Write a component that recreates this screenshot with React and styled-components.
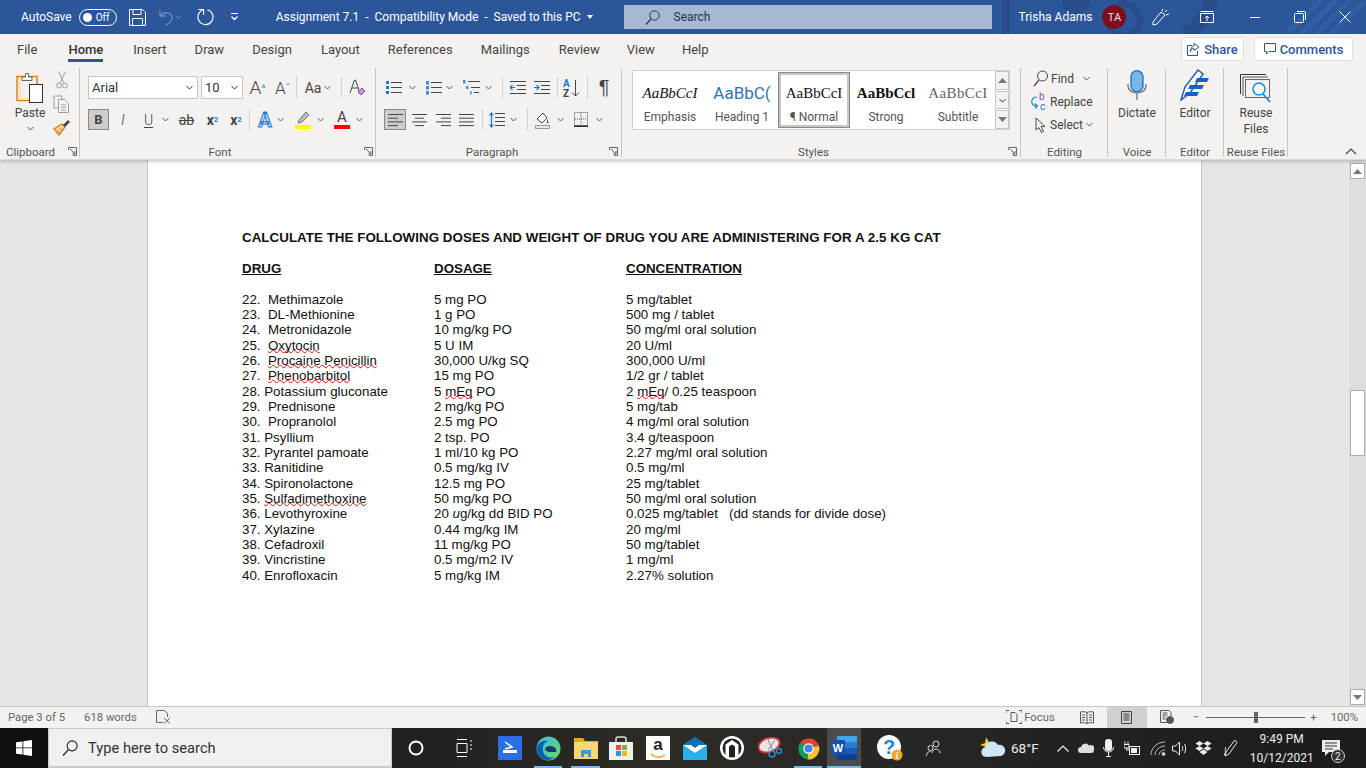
import React from 'react';
import styled, { createGlobalStyle } from 'styled-components';

const Global = createGlobalStyle`
  html, body { margin: 0; padding: 0; width: 1366px; height: 768px; overflow: hidden; background: #fff; }
  * { box-sizing: border-box; }
`;
const UI = `'Roboto', 'Noto Sans', sans-serif`;

const Screen = styled.div`
  width: 1366px; height: 768px; display: flex; flex-direction: column; overflow: hidden;
  font-family: ${UI}; font-size: 12px; color: #444;
`;

/* ---------- title bar ---------- */
const TitleBar = styled.header`
  position: relative; height: 34px; flex: none; display: flex; align-items: center;
  background: #2b579a; color: #fff; padding-left: 21px; overflow: hidden;
`;
const TitleDecor = styled.svg`position: absolute; right: 0; top: 0;`;
const TitleText = styled.span`
  position: relative; margin-left: ${p => p.$ml || 0}px; white-space: pre; font-size: ${p => p.$size || 12}px;
`;
const TitleIcon = styled.span`
  position: relative; display: inline-flex; align-items: center; justify-content: center;
  margin-left: ${p => p.$ml || 0}px; width: ${p => p.$w}px;
`;
const Toggle = styled.span`
  position: relative; margin-left: 7px; width: 38px; height: 17px; border: 1px solid #fff; border-radius: 9px;
  display: flex; align-items: center; font-size: 10px; padding-left: 3px; gap: 4px;
  &::before { content: ''; width: 9px; height: 9px; border-radius: 50%; background: #fff; }
`;
const SearchBox = styled.div`
  position: relative; margin-left: 31px; width: 368px; height: 24px; background: #a6b8d2; color: #24364f;
  display: flex; align-items: center; padding-left: 21px; gap: 14px;
`;
const Avatar = styled.span`
  position: relative; margin-left: 10px; width: 24px; height: 24px; border-radius: 50%; background: #7d0e1e;
  display: flex; align-items: center; justify-content: center; font-size: 11px; color: #f4dcdc;
`;

/* ---------- tabs ---------- */
const TabBar = styled.nav`
  height: 32px; flex: none; display: flex; align-items: flex-start; background: #f3f2f1; padding: 0 13px 0 3px;
`;
const Tab = styled.div`
  height: 30px; padding: 0 14px; margin-left: ${p => p.$ml || 0}px; display: flex; align-items: center; font-size: 13px; position: relative;
  color: ${p => p.$on ? '#333' : '#444'}; font-weight: ${p => p.$on ? 500 : 400};
  ${p => p.$on && `&::after { content: ''; position: absolute; left: 14px; right: 14px; bottom: 2px; height: 3px; background: #2b579a; }`}
`;
const TabSpacer = styled.div`flex: 1;`;
const PillButton = styled.button`
  height: 24px; width: ${p => p.$w}px; margin: 3px 0 0 ${p => p.$ml || 0}px; background: #fff; border: 1px solid #e1dfdd; border-radius: 2px;
  display: flex; align-items: center; justify-content: center; gap: 4px; padding: 0;
  font: 500 13px ${UI}; color: #2b579a;
`;

/* ---------- ribbon ---------- */
const Ribbon = styled.section`
  height: 94px; flex: none; display: flex; background: #f3f2f1; position: relative; z-index: 2;
  box-shadow: 0 2px 3px rgba(0,0,0,.18); border-bottom: 1px solid #dcdad8;
`;
const Group = styled.div`
  position: relative; width: ${p => p.$w}px; flex: none; display: flex; flex-direction: column; height: 93px;
  &::after { content: ''; position: absolute; right: 0; top: 2px; bottom: 2px; width: 1px; background: #c8c6c4; }
`;
const GroupBody = styled.div`flex: 1; min-height: 0; display: flex; ${p => p.$col && 'flex-direction: column;'} padding: ${p => p.$pad || '0'};`;
const GroupLabel = styled.div`
  height: 15px; line-height: 17px; flex: none; font-size: 11.5px; color: #555; white-space: nowrap;
  text-align: ${p => p.$left ? 'left' : 'center'}; padding-left: ${p => p.$left ? 6 : 0}px; padding-right: ${p => p.$pr || 0}px;
`;
const Launcher = styled.svg`position: absolute; right: ${p => p.$r}px; bottom: 3px;`;
const Row = styled.div`
  height: 21px; flex: none; display: flex; align-items: center; margin-bottom: 11px; padding-left: ${p => p.$pl || 0}px;
`;
const Tool = styled.span`
  flex: none; height: 21px; display: inline-flex; align-items: center; justify-content: center; white-space: nowrap;
  width: ${p => p.$w}px; margin-left: ${p => p.$ml || 0}px; color: ${p => p.$c || '#444'};
  font-size: ${p => p.$fs || 12}px; font-family: ${p => p.$arial ? `'Liberation Sans', sans-serif` : 'inherit'};
  font-weight: ${p => p.$b ? 700 : p.$thin ? 300 : 400}; font-style: ${p => p.$i ? 'italic' : 'normal'};
  ${p => p.$on && 'background: #cfcdcb; border: 1px solid #8a8886;'}
  ${p => p.$outline && '-webkit-text-stroke: 1px #1e78c8;'}
`;
const Caret = styled.sup`font-size: 9px; font-weight: 700; color: #2f8fd8; line-height: 0;`;
const Sub = styled.sub`font-size: 8px; color: #1e88d2; line-height: 0;`;
const Sup = styled.sup`font-size: 8px; color: #1e88d2; line-height: 0;`;
const Strike = styled.span`text-decoration: line-through;`;
const Under = styled.span`text-decoration: underline; text-underline-offset: 2px;`;
const Rule = styled.span`flex: none; width: 1px; height: 21px; background: #d2d0ce; margin-left: ${p => p.$ml || 0}px;`;
const ColorA = styled.span`
  display: inline-flex; flex-direction: column; align-items: center; line-height: 14px; font-size: 15px; color: #444;
  &::after { content: ''; width: 16px; height: 4px; margin-top: 1px; background: ${p => p.$bar}; }
`;
const ChevSvg = styled.svg`flex: none; margin-left: ${p => p.$ml || 0}px;`;
const Chev = ({ ml, dark }) => (
  <ChevSvg $ml={ml} width="7" height="5" viewBox="0 0 7 5"><path d="M.5 1 3.500 4 6.500 1" fill="none" stroke={dark || '#555'} strokeWidth="1" /></ChevSvg>
);
const Combo = styled.div`
  width: ${p => p.$w}px; margin-left: ${p => p.$ml || 0}px; height: 23px; margin-top: -1px; flex: none; background: #fff; border: 1px solid #c8c6c4;
  display: flex; align-items: center; justify-content: space-between; padding: 0 4px 0 3px;
  font: 13px ${UI}; color: #333;
`;
const PasteCol = styled.div`
  width: 53px; flex: none; display: flex; flex-direction: column; align-items: center; padding: 6px 0 0 7px; font-size: 12px;
`;
const PasteLabel = styled.span`margin-top: 1px; margin-bottom: 5px; line-height: 16px;`;
const SmallCol = styled.div`width: 17px; flex: none; display: flex; flex-direction: column; align-items: center; padding-top: 5px; gap: 6px;`;

const Gallery = styled.div`
  margin: 4px 0 0 10px; width: 378px; height: 60px; display: flex; background: #fff; border: 1px solid #d2d0ce; padding: 1px 0 0 1px;
`;
const StyleItem = styled.div`
  width: 72px; height: 56px; flex: none; display: flex; flex-direction: column; align-items: center; padding-top: 12px; overflow: hidden;
  ${p => p.$on && 'border: 3px solid #c8c6c4; outline: 1px solid #8a8886; outline-offset: -1px; padding-top: 9px;'}
`;
const StyleSample = styled.span`
  height: 18px; line-height: 18px; width: 64px; overflow: hidden; white-space: nowrap; text-align: center; color: ${p => p.$c || '#111'};
  font-family: ${p => p.$sans ? UI : `'Liberation Serif', serif`}; font-size: ${p => p.$fs || 15}px;
  font-style: ${p => p.$i ? 'italic' : 'normal'}; font-weight: ${p => p.$b ? 700 : 400}; letter-spacing: ${p => p.$ls || 0}px;
`;
const StyleName = styled.span`margin-top: 7px; font-size: 12px; line-height: 16px; color: #555; white-space: nowrap;`;
const GalleryScroll = styled.div`width: 14px; margin-left: 1px; margin-top: -1px; display: flex; flex-direction: column; gap: 1px; flex: none;`;
const ScrollCell = styled.div`
  flex: 1; border: 1px solid #c8c6c4; background: #f3f2f1; display: flex; align-items: center; justify-content: center;
`;
const EditRow = styled.div`
  height: 23px; display: flex; align-items: center; padding-left: ${p => p.$pl || 12}px; gap: 3px; font-size: 12px;
`;
const BigTool = styled.div`
  flex: 1; display: flex; flex-direction: column; align-items: center; padding-top: ${p => p.$pt || 1}px; font-size: 12px;
  span { line-height: 16px; }
`;
const BigIcon = styled.div`
  height: ${p => p.$h || 35}px; display: flex; align-items: center; justify-content: center; margin-bottom: ${p => p.$mb ?? 3}px;
`;
const RibbonEnd = styled.div`flex: 1; display: flex; align-items: flex-end; justify-content: flex-end; padding: 0 9px 4px 0;`;

/* ---------- document ---------- */
const DocArea = styled.main`flex: 1; min-height: 0; display: flex; background: #e6e6e6;`;
const Gutter = styled.div`width: ${p => p.$w ? p.$w + 'px' : 'auto'}; flex: ${p => p.$w ? 'none' : 1};`;
const Page = styled.article`
  width: 1055px; flex: none; background: #fff; border: solid #c6c6c6; border-width: 0 1px; padding: 70px 0 0 94px;
  font: 13.33px/15.33px 'Liberation Sans', Arial, sans-serif; color: #111; letter-spacing: 0;
`;
const Heading = styled.div`font-weight: 700; height: 30.66px; white-space: pre; letter-spacing: .05px;`;
const DocRow = styled.div`
  display: grid; grid-template-columns: 192px 192px auto; height: ${p => p.$h || 15.33}px; white-space: pre;
  ${p => p.$head && 'font-weight: 700; text-decoration: underline;'}
`;
const Spell = styled.span`
  text-decoration: underline wavy #e01010 1px; text-underline-offset: -1px; text-decoration-skip-ink: none;
`;
const Scrollbar = styled.aside`
  width: 17px; flex: none; background: #dedede; display: flex; flex-direction: column; padding: 3px 0 1px 1px;
`;
const ScrollBtn = styled.div`
  height: 16px; width: 15px; flex: none; background: #fff; border: 1px solid #ababab; display: flex; align-items: center; justify-content: center;
`;
const ScrollThumb = styled.div`height: 66px; width: 15px; flex: none; margin-top: ${p => p.$t}px; background: #fff; border: 1px solid #ababab;`;
const Grow = styled.div`flex: 1;`;

/* ---------- status ---------- */
const StatusBar = styled.footer`
  height: 22px; flex: none; display: flex; align-items: center; background: #f3f2f1; border-top: 1px solid #c8c6c4;
  padding: 0 8px 1px; font-size: 11.3px; color: #666;
`;
const StatusItem = styled.span`
  margin-left: ${p => p.$ml || 0}px; display: inline-flex; align-items: center; justify-content: center; white-space: nowrap; flex: none;
  ${p => p.$w && `width: ${p.$w}px;`} ${p => p.$on && 'background: #d2d0ce; height: 21px;'}
`;
const Zoom = styled.span`
  position: relative; margin-left: 7px; width: 99px; height: 1px; background: #666; flex: none;
  &::after { content: ''; position: absolute; left: 48px; top: -5px; width: 4px; height: 11px; background: #666; }
`;

/* ---------- taskbar ---------- */
const Taskbar = styled.footer`
  height: 40px; flex: none; display: flex; align-items: center; color: #fff;
  background: linear-gradient(90deg, #131313 0, #22211e 30%, #2d2b26 48%, #2a2926 60%, #222 78%, #1c1c1c 100%);
`;
const StartBtn = styled.div`width: 48px; height: 40px; flex: none; display: flex; align-items: center; justify-content: center; background: #111;`;
const TaskSearch = styled.div`
  width: 344px; height: 40px; flex: none; background: #f0f0f0; border: 1px solid #c9c9c9; border-bottom-width: 2px; display: flex; align-items: center; padding-left: 13px;
  gap: 10px; color: #333; font-size: 14.700px;
`;
const TaskIcon = styled.div`
  position: relative; flex: none; height: 40px; width: ${p => p.$w}px; margin-left: ${p => p.$ml || 0}px; display: flex; align-items: center; justify-content: center;
  ${p => p.$bg && `background: ${p.$bg};`}
  ${p => p.$run && `&::after { content: ''; position: absolute; left: 0; right: 0; bottom: 0; height: 2px; background: #76b9ed; }`}
`;
const TrayText = styled.span`margin-left: ${p => p.$ml || 0}px; font-size: 13.5px; flex: none; color: #eee;`;
const Clock = styled.div`
  margin-left: 11px; padding-top: 1px; width: 62px; flex: none; display: flex; flex-direction: column; align-items: center; gap: 4px; font-size: 12px; color: #eee; line-height: 15px; white-space: nowrap;
`;
const AmazonBox = styled.div`
  width: 24px; height: 24px; background: #fff; display: flex; flex-direction: column; align-items: center; color: #222; font: 700 17px/17px 'Liberation Sans', sans-serif; 
`;
const Badge = styled.span`
  position: absolute; right: -5px; top: 21px; width: 14px; height: 14px; border-radius: 50%; border: 1px solid #ccc; background: #333;
  display: flex; align-items: center; justify-content: center; font-size: 10px; color: #eee;
`;

/* ---------- icons ---------- */
const Launch = ({ r }) => (
  <Launcher $r={r} width="9" height="9" viewBox="0 0 9 9"><path d="M.5 3V.5H8.500V8.500H5M2 2 7 7M7 4V7H4" fill="none" stroke="#666" /></Launcher>
);
const L = ({ x1, x2, y, c = '#444', w = 1 }) => <line x1={x1} x2={x2} y1={y} y2={y} stroke={c} strokeWidth={w} />;
const Lines = ({ x1 = 0, x2 = 15, ys, c }) => ys.map(y => <L key={y} x1={x1} x2={x2} y={y + .5} c={c} />);

const PasteIcon = () => (
  <svg width="28" height="32" viewBox="0 0 28 32">
    <rect x="1" y="4.500" width="20" height="24" fill="#f3f2f1" stroke="#d9791a" strokeWidth="1.400" />
    <path d="M2.500 6v21.500H13V26H5V6z" fill="#fbe3b0" />
    <path d="M6 8.500V5h3.500V1.500h3V5H16v3.500z" fill="#f8f8f8" stroke="#666" />
    <rect x="13.500" y="12.500" width="13" height="18" fill="#fff" stroke="#333" />
  </svg>
);
const CutIcon = () => (
  <svg width="12" height="18" viewBox="0 0 12 18" fill="none" stroke="#a19f9d">
    <path d="M2.500 .5 8 12M9.500 .5 4 12" /><circle cx="3" cy="14.500" r="2.500" /><circle cx="9" cy="14.500" r="2.500" />
  </svg>
);
const CopyIcon = () => (
  <svg width="17" height="18" viewBox="0 0 17 18" fill="none" stroke="#a19f9d">
    <path d="M1 1h8v3M1 1v12h4" /><path d="M5.500 4.500h6l4 4v9h-10z" /><path d="M8 10h5M8 12.500h5M8 15h5" />
  </svg>
);
const PainterIcon = () => (
  <svg width="18" height="17" viewBox="0 0 18 17">
    <path d="M9 5 1 10l5 6 6-8z" fill="#fbd9a6" stroke="#d9791a" strokeWidth="1.300" />
    <path d="M10 6 15 1l2 2-5 5z" fill="#444" />
    <path d="M4 10.500l2.500 3M7 9l2 2.500" stroke="#d9791a" />
  </svg>
);
const ClearIcon = () => (
  <svg width="17" height="20" viewBox="0 0 17 20">
    <path d="M1 15 5.500 2h1L11 15M3 10h6" fill="none" stroke="#444" />
    <path d="M9 14l4-4 3 3-4 4z" fill="#c79ad6" stroke="#8e3ea8" />
  </svg>
);
const BulletIcon = () => (
  <svg width="16" height="15" viewBox="0 0 16 15">
    {[1, 6, 11].map(y => <rect key={y} x="0" y={y} width="3" height="3" fill="#1e78c8" />)}
    <Lines x1={5} x2={16} ys={[2, 7, 12]} />
  </svg>
);
const NumberIcon = () => (
  <svg width="17" height="15" viewBox="0 0 17 15">
    {[1, 6, 11].map(y => <rect key={y} x="1" y={y} width="3" height="3.500" fill="#3c8fd8" />)}
    <Lines x1={6} x2={17} ys={[2, 7, 12]} />
  </svg>
);
const MultiIcon = () => (
  <svg width="17" height="15" viewBox="0 0 17 15">
    <rect x="0" y="0" width="2.500" height="3.500" fill="#3c8fd8" /><rect x="3" y="6" width="2.500" height="3" fill="#3c8fd8" /><rect x="7" y="11" width="1.500" height="3.500" fill="#3c8fd8" />
    <L x1={5} x2={17} y={1.5} /><L x1={8} x2={17} y={7.5} /><L x1={11} x2={16} y={12.5} />
  </svg>
);
const IndentIcon = ({ rev }) => (
  <svg width="16" height="15" viewBox="0 0 16 15">
    <Lines x1={0} x2={16} ys={[1, 13]} /><Lines x1={7} x2={16} ys={[5, 9]} />
    <path d={rev ? 'M5 7.500H0M2.500 5 0 7.500 2.500 10' : 'M0 7.500H5M2.500 5 5 7.500 2.500 10'} fill="none" stroke="#1e78c8" strokeWidth="1.200" />
  </svg>
);
const SortIcon = () => (
  <svg width="18" height="20" viewBox="0 0 18 20">
    <text x="0" y="9" fontSize="10" fontWeight="700" fill="#1e78c8" fontFamily="Roboto, sans-serif">A</text>
    <text x="0" y="19" fontSize="10" fontWeight="700" fill="#444" fontFamily="Roboto, sans-serif">Z</text>
    <path d="M12.500 2v16M9 14.500l3.500 3.500 3.500-3.500" fill="none" stroke="#444" />
  </svg>
);
const AlignIcon = ({ kind }) => {
  const s = { l: [[0, 15], [0, 10], [0, 15], [0, 10]], c: [[0, 15], [3, 12], [0, 15], [3, 12]], r: [[0, 15], [5, 15], [0, 15], [5, 15]], j: [[0, 15], [0, 15], [0, 15], [0, 15]] }[kind];
  return <svg width="15" height="14" viewBox="0 0 15 14">{s.map((p, i) => <L key={i} x1={p[0]} x2={p[1]} y={1.5 + i * 3.7} />)}</svg>;
};
const SpacingIcon = () => (
  <svg width="16" height="16" viewBox="0 0 16 16">
    <Lines x1={6} x2={16} ys={[1, 5, 9, 13]} />
    <path d="M2.500 1v14M.5 3.500l2-2.500 2 2.500M.5 12.500l2 2.500 2-2.500" fill="none" stroke="#1e78c8" strokeWidth="1.200" />
  </svg>
);
const ShadeIcon = () => (
  <svg width="15" height="18" viewBox="0 0 15 18">
    <path d="M2 8 8 2l4 5-5 5z" fill="#fff" stroke="#444" /><path d="M12 8c1 2 2 3 1.500 4-.7.600-2 0-1.500-4z" fill="#444" />
    <rect x=".5" y="14.500" width="14" height="3" fill="#e8e6e4" stroke="#999" />
  </svg>
);
const BorderIcon = () => (
  <svg width="14" height="15" viewBox="0 0 14 15">
    <rect x=".5" y=".5" width="13" height="13" fill="none" stroke="#555" strokeDasharray="1 1" />
    <path d="M7 1v12M1 7h12" stroke="#555" strokeDasharray="1 1" /><path d="M0 14.200h14" stroke="#222" strokeWidth="1.500" />
  </svg>
);
const FindIcon = () => (
  <svg width="15" height="17" viewBox="0 0 15 17" fill="none" stroke="#444"><circle cx="9.500" cy="6" r="5" /><path d="M6 10 1 16" strokeWidth="1.200" /></svg>
);
const ReplaceIcon = () => (
  <svg width="16" height="19" viewBox="0 0 16 19">
    <text x="8" y="8" fontSize="10" fill="#9c3fb8" fontFamily="Roboto, sans-serif">b</text>
    <text x="9" y="18" fontSize="10" fill="#1e78c8" fontFamily="Roboto, sans-serif">c</text>
    <path d="M6 5C2 5 0 8 1 11c.5 2 2 3 5 3M4 11.500 6.500 14 4 16.500" fill="none" stroke="#1e88d2" strokeWidth="1.200" />
  </svg>
);
const CursorIcon = () => (
  <svg width="12" height="16" viewBox="0 0 12 16"><path d="M1 1v12l3-2.500 2.500 5 2-1-2.500-5h4z" fill="#fff" stroke="#444" /></svg>
);
const MicIcon = () => (
  <svg width="20" height="30" viewBox="0 0 20 30">
    <rect x="4" y=".7" width="12" height="21" rx="6" fill="#79b7ea" stroke="#1f6fc0" strokeWidth="1.300" />
    <path d="M1 14v2c0 4 4 7 9 7s9-3 9-7v-2M10 23v7" fill="none" stroke="#666" strokeWidth="1.200" />
  </svg>
);
const EditorIcon = () => (
  <svg width="32" height="32" viewBox="0 0 32 32">
    <path d="M2 31 6 18 19 1l5 4-13 19z" fill="#fff" stroke="#1b5fbf" strokeWidth="1.500" />
    <path d="M18 9h12l-2 4H16zM11 16h14l-2 4H9zM7 23h13l-2 4H5z" fill="#1b5fbf" />
  </svg>
);
const ReuseIcon = () => (
  <svg width="32" height="29" viewBox="0 0 32 29" fill="none">
    <path d="M.5 20V.5H26" stroke="#333" /><path d="M3 22V3h25" stroke="#555" />
    <rect x="5.500" y="5.500" width="24" height="18" fill="#f3f2f1" stroke="#666" />
    <circle cx="19" cy="15" r="6" stroke="#1e88d2" strokeWidth="1.500" fill="#f2f8fc" /><path d="M23 20l7 8" stroke="#1e88d2" strokeWidth="1.800" />
  </svg>
);
const UpChevron = () => <svg width="12" height="7" viewBox="0 0 12 7"><path d="M1 6 6 1l5 5" fill="none" stroke="#444" strokeWidth="1.200" /></svg>;
const MiniTri = ({ down }) => <svg width="9" height="5" viewBox="0 0 9 5"><path d={down ? 'M0 0h9L4.500 5z' : 'M4.500 0 9 5H0z'} fill="#777" /></svg>;

const SearchGlyph = ({ c, w = 15 }) => (
  <svg width={w} height={w} viewBox="0 0 15 15" fill="none" stroke={c}><circle cx="9.500" cy="5.500" r="4.700" /><path d="M6 9 1 14.500" strokeWidth="1.200" /></svg>
);

/* ---------- app ---------- */
const drugs = [
  [<>22.  Methimazole</>, '5 mg PO', '5 mg/tablet'],
  [<>23.  DL-Methionine</>, '1 g PO', '500 mg / tablet'],
  [<>24.  Metronidazole</>, '10 mg/kg PO', '50 mg/ml oral solution'],
  [<>25.  <Spell>Oxytocin</Spell></>, '5 U IM', '20 U/ml'],
  [<>26.  <Spell>Procaine Penicillin</Spell></>, '30,000 U/kg SQ', '300,000 U/ml'],
  [<>27.  <Spell>Phenobarbitol</Spell></>, '15 mg PO', '1/2 gr / tablet'],
  [<>28. Potassium gluconate</>, <>5 <Spell>mEq</Spell> PO</>, <>2 <Spell>mEq</Spell>/ 0.25 teaspoon</>],
  [<>29.  Prednisone</>, '2 mg/kg PO', '5 mg/tab'],
  [<>30.  Propranolol</>, '2.5 mg PO', '4 mg/ml oral solution'],
  [<>31. Psyllium</>, '2 tsp. PO', '3.4 g/teaspoon'],
  [<>32. Pyrantel pamoate</>, '1 ml/10 kg PO', '2.27 mg/ml oral solution'],
  [<>33. Ranitidine</>, '0.5 mg/kg IV', '0.5 mg/ml'],
  [<>34. Spironolactone</>, '12.5 mg PO', '25 mg/tablet'],
  [<>35. <Spell>Sulfadimethoxine</Spell></>, '50 mg/kg PO', '50 mg/ml oral solution'],
  [<>36. Levothyroxine</>, <>20 <i>u</i>g/kg dd BID PO</>, '0.025 mg/tablet   (dd stands for divide dose)'],
  [<>37. Xylazine</>, '0.44 mg/kg IM', '20 mg/ml'],
  [<>38. Cefadroxil</>, '11 mg/kg PO', '50 mg/tablet'],
  [<>39. Vincristine</>, '0.5 mg/m2 IV', '1 mg/ml'],
  [<>40. Enrofloxacin</>, '5 mg/kg IM', '2.27% solution'],
];

const tabs = [['File'], ['Home', 3], ['Insert', 2], ['Draw'], ['Design'], ['Layout', 1], ['References'], ['Mailings'], ['Review', 1], ['View', -1], ['Help', -1]];
const gallery = [
  { name: 'Emphasis', i: true },
  { name: 'Heading 1', sans: true, fs: 17, c: '#2e74b5', text: 'AaBbC(' },
  { name: '¶ Normal', on: true },
  { name: 'Strong', b: true, text: 'AaBbCcl' },
  { name: 'Subtitle', c: '#666', ls: .4 },
];

export default function App() {
  return (
    <Screen>
      <Global />
      <TitleBar>
        <TitleDecor width="370" height="34" viewBox="0 0 370 34" fill="none">
          <circle cx="128" cy="20" r="16" stroke="#284d8a" strokeWidth="7" />
          <circle cx="80" cy="0" r="14" fill="#284d8a" />
          <path d="M190 34C210 20 216 8 214 -4" stroke="#284d8a" strokeWidth="14" />
          <path d="M290 34 325 0M305 34 340 0M320 34 354 0M335 34 368 2" stroke="#2f5fa4" strokeWidth="5" />
          <path d="M10 34V0" stroke="#284d8a" strokeWidth="8" />
        </TitleDecor>
        <TitleText>AutoSave</TitleText>
        <Toggle>Off</Toggle>
        <TitleIcon $ml={12} $w={18}>
          <svg width="17" height="17" viewBox="0 0 17 17" fill="none" stroke="#fff"><path d="M.5.5h13l3 3v13H.5z" /><path d="M4 .5v5h8v-5M3.500 16.500v-7h10v7" /></svg>
        </TitleIcon>
        <TitleIcon $ml={12} $w={22}>
          <svg width="22" height="17" viewBox="0 0 22 17" fill="none" stroke="#6d8bb9" strokeWidth="1.300"><path d="M1 1v6h6M1 7C5 2 13 3 13 9c0 3-3 6-6 7" /><path d="M17 7l2.500 2.500L22 7" strokeWidth="1" /></svg>
        </TitleIcon>
        <TitleIcon $ml={16} $w={17}>
          <svg width="18" height="18" viewBox="0 0 18 18" fill="none" stroke="#fff" strokeWidth="1.200"><path d="M6 1.600A8 8 0 1 0 11 1.300" /><path d="M1.500 1H7V6.500" /></svg>
        </TitleIcon>
        <TitleIcon $ml={16} $w={9}>
          <svg width="9" height="8" viewBox="0 0 9 8" fill="none" stroke="#fff"><path d="M1 .5h7" /><path d="M1.500 3.500 4.500 6.500 7.500 3.500" strokeWidth="1.300" /></svg>
        </TitleIcon>
        <TitleText $ml={37}>Assignment 7.1  -  Compatibility Mode  -  Saved to this PC</TitleText>
        <TitleIcon $ml={6} $w={6}><svg width="6" height="4" viewBox="0 0 6 4"><path d="M0 0h6L3 4z" fill="#fff" /></svg></TitleIcon>
        <SearchBox><SearchGlyph c="#24364f" />Search</SearchBox>
        <TitleText $ml={27}>Trisha Adams</TitleText>
        <Avatar>TA</Avatar>
        <TitleIcon $ml={26} $w={18}>
          <svg width="18" height="18" viewBox="0 0 18 18" fill="none" stroke="#fff"><path d="M1 14 9 4l4 3-8 9-4 1zM10 3l1-2M13 4l2-2M14 7l3-1" /></svg>
        </TitleIcon>
        <TitleIcon $ml={30} $w={14}>
          <svg width="14" height="12" viewBox="0 0 14 12" fill="none" stroke="#fff"><path d="M.5 2.500h13v9H.5zM.5.500h13M7 10V5M5 7l2-2 2 2" /></svg>
        </TitleIcon>
        <TitleIcon $ml={36} $w={10}><svg width="10" height="1"><rect width="10" height="1" fill="#fff" /></svg></TitleIcon>
        <TitleIcon $ml={34} $w={12}>
          <svg width="12" height="12" viewBox="0 0 12 12" fill="none" stroke="#fff"><rect x=".5" y="2.500" width="9" height="9" rx="1" /><path d="M3 .5h7a1.500 1.500 0 0 1 1.500 1.500v7" /></svg>
        </TitleIcon>
        <TitleIcon $ml={33} $w={12}>
          <svg width="12" height="12" viewBox="0 0 12 12"><path d="M.5.5l11 11M11.500.5l-11 11" stroke="#fff" /></svg>
        </TitleIcon>
      </TitleBar>

      <TabBar>
        {tabs.map(([t, ml]) => <Tab key={t} $ml={ml} $on={t === 'Home'}>{t}</Tab>)}
        <TabSpacer />
        <PillButton $w={63}>
          <svg width="13" height="14" viewBox="0 0 13 14" fill="none" stroke="#2b579a"><path d="M5 3.500H.5v10h10V9M7 1.500l5 3.500-5 3.500v-2C4.500 6.500 3.500 8 3.500 10c0-3 1-5.500 3.500-6z" /></svg>
          Share
        </PillButton>
        <PillButton $w={99} $ml={10}>
          <svg width="12" height="12" viewBox="0 0 12 12" fill="none" stroke="#2b579a"><path d="M.5.5h11v8H5L2.500 11V8.500h-2z" /></svg>
          Comments
        </PillButton>
      </TabBar>

      <Ribbon>
        <Group $w={80}>
          <GroupBody>
            <PasteCol>
              <PasteIcon />
              <PasteLabel>Paste</PasteLabel>
              <Chev />
            </PasteCol>
            <SmallCol>
              <CutIcon /><CopyIcon /><PainterIcon />
            </SmallCol>
          </GroupBody>
          <GroupLabel $left>Clipboard</GroupLabel>
          <Launch r={3} />
        </Group>

        <Group $w={296}>
          <GroupBody $col $pad="11px 0 0 8px">
            <Row>
              <Combo $w={110}>Arial<Chev dark="#333" /></Combo>
              <Combo $w={42} $ml={3}>10<Chev dark="#333" /></Combo>
              <Tool $ml={7} $w={15} $fs={19} $thin>A<Caret>^</Caret></Tool>
              <Tool $ml={10} $w={15} $fs={17} $thin>A<Caret>ˇ</Caret></Tool>
              <Rule $ml={6} />
              <Tool $ml={7} $w={18} $fs={14}>Aa</Tool>
              <Chev ml={2} />
              <Rule $ml={10} />
              <Tool $ml={7} $w={17}><ClearIcon /></Tool>
            </Row>
            <Row>
              <Tool $w={21} $b $fs={13} $on>B</Tool>
              <Tool $ml={9} $w={10} $i $thin $fs={15}>I</Tool>
              <Tool $ml={14} $w={13} $fs={14} $thin><Under>U</Under></Tool>
              <Chev ml={7} />
              <Tool $ml={9} $w={17} $fs={14}><Strike>ab</Strike></Tool>
              <Tool $ml={10} $w={15} $b $fs={14}>x<Sub>2</Sub></Tool>
              <Tool $ml={9} $w={14} $b $fs={14}>x<Sup>2</Sup></Tool>
              <Rule $ml={6} />
              <Tool $ml={7} $w={16} $fs={20} $b $outline $c="#cfe6f8">A</Tool>
              <Chev ml={4} />
              <Tool $ml={11} $w={16}>
                <ColorA $bar="#ffff00"><svg width="14" height="14" viewBox="0 0 14 14"><path d="M2 13l1-3 7-8 3 3-7 7z" fill="#bbb" stroke="#777" /></svg></ColorA>
              </Tool>
              <Chev ml={6} />
              <Tool $ml={10} $w={16}><ColorA $bar="#ff0000">A</ColorA></Tool>
              <Chev ml={6} />
            </Row>
          </GroupBody>
          <GroupLabel $pr={16}>Font</GroupLabel>
          <Launch r={3} />
        </Group>

        <Group $w={246}>
          <GroupBody $col $pad="11px 0 0 0">
            <Row $pl={10}>
              <Tool $w={16}><BulletIcon /></Tool>
              <Chev ml={7} />
              <Tool $ml={9} $w={17}><NumberIcon /></Tool>
              <Chev ml={4} />
              <Tool $ml={10} $w={17}><MultiIcon /></Tool>
              <Chev ml={5} />
              <Rule $ml={10} />
              <Tool $ml={7} $w={16}><IndentIcon rev /></Tool>
              <Tool $ml={8} $w={16}><IndentIcon /></Tool>
              <Rule $ml={7} />
              <Tool $ml={5} $w={18}><SortIcon /></Tool>
              <Rule $ml={6} />
              <Tool $ml={10} $w={12} $fs={20} $arial>¶</Tool>
            </Row>
            <Row $pl={8}>
              <Tool $w={22} $on><AlignIcon kind="l" /></Tool>
              <Tool $ml={6} $w={15}><AlignIcon kind="c" /></Tool>
              <Tool $ml={9} $w={15}><AlignIcon kind="r" /></Tool>
              <Tool $ml={8} $w={15}><AlignIcon kind="j" /></Tool>
              <Rule $ml={8} />
              <Tool $ml={6} $w={16}><SpacingIcon /></Tool>
              <Chev ml={5} />
              <Rule $ml={10} />
              <Tool $ml={7} $w={15}><ShadeIcon /></Tool>
              <Chev ml={7} />
              <Tool $ml={10} $w={14}><BorderIcon /></Tool>
              <Chev ml={8} />
            </Row>
          </GroupBody>
          <GroupLabel $pr={14}>Paragraph</GroupLabel>
          <Launch r={4} />
        </Group>

        <Group $w={399}>
          <GroupBody>
            <Gallery>
              {gallery.map(g => (
                <StyleItem key={g.name} $on={g.on}>
                  <StyleSample $i={g.i} $b={g.b} $c={g.c} $fs={g.fs} $sans={g.sans} $ls={g.ls}>{g.text || 'AaBbCcI'}</StyleSample>
                  <StyleName>{g.name}</StyleName>
                </StyleItem>
              ))}
              <GalleryScroll>
                <ScrollCell><MiniTri /></ScrollCell>
                <ScrollCell><Chev dark="#333" /></ScrollCell>
                <ScrollCell><MiniTri down /></ScrollCell>
              </GalleryScroll>
            </Gallery>
          </GroupBody>
          <GroupLabel $pr={16}>Styles</GroupLabel>
          <Launch r={4} />
        </Group>

        <Group $w={87}>
          <GroupBody $col $pad="1px 0 0">
            <EditRow><FindIcon />Find<Chev ml={6} /></EditRow>
            <EditRow $pl={10}><ReplaceIcon />Replace</EditRow>
            <EditRow $pl={14}><CursorIcon /><span>Select</span><Chev /></EditRow>
          </GroupBody>
          <GroupLabel>Editing</GroupLabel>
        </Group>

        <Group $w={58}>
          <BigTool><BigIcon><MicIcon /></BigIcon><span>Dictate</span></BigTool>
          <GroupLabel>Voice</GroupLabel>
        </Group>
        <Group $w={58}>
          <BigTool><BigIcon><EditorIcon /></BigIcon><span>Editor</span></BigTool>
          <GroupLabel>Editor</GroupLabel>
        </Group>
        <Group $w={64}>
          <BigTool $pt={8}><BigIcon $h={29} $mb={2}><ReuseIcon /></BigIcon><span>Reuse</span><span>Files</span></BigTool>
          <GroupLabel>Reuse Files</GroupLabel>
        </Group>
        <RibbonEnd><UpChevron /></RibbonEnd>
      </Ribbon>

      <DocArea>
        <Gutter $w={147} />
        <Page>
          <Heading>CALCULATE THE FOLLOWING DOSES AND WEIGHT OF DRUG YOU ARE ADMINISTERING FOR A 2.5 KG CAT</Heading>
          <DocRow $head $h={31.16}>
            <span>DRUG</span><span>DOSAGE</span><span>CONCENTRATION</span>
          </DocRow>
          {drugs.map((d, i) => (
            <DocRow key={i}><span>{d[0]}</span><span>{d[1]}</span><span>{d[2]}</span></DocRow>
          ))}
        </Page>
        <Gutter />
        <Scrollbar>
          <ScrollBtn><MiniTri /></ScrollBtn>
          <ScrollThumb $t={211} />
          <Grow />
          <ScrollBtn><MiniTri down /></ScrollBtn>
        </Scrollbar>
      </DocArea>

      <StatusBar>
        <StatusItem>Page 3 of 5</StatusItem>
        <StatusItem $ml={19}>618 words</StatusItem>
        <StatusItem $ml={19}>
          <svg width="15" height="14" viewBox="0 0 15 14" fill="none" stroke="#666"><path d="M.5.5h8l3 3V7M.5.500v12H7M8 8l6 5.500M14 8l-6 5.500" /></svg>
        </StatusItem>
        <Grow />
        <StatusItem>
          <svg width="16" height="14" viewBox="0 0 16 14" fill="none" stroke="#555"><path d="M0 3V.5h3M13 .5h3V3M0 11v2.500h3M13 13.500h3V11M5 2.500h4l2 2v7H5z" /></svg>
        </StatusItem>
        <StatusItem $ml={2}>Focus</StatusItem>
        <StatusItem $ml={25}>
          <svg width="14" height="13" viewBox="0 0 14 13" fill="none" stroke="#555"><path d="M7 1.500C5 .5 2 .5.500 1v11c2-.5 4.500-.5 6.500.500 2-1 4.500-1 6.500-.500V1C12 .5 9 .5 7 1.500zM7 1.500v11M2 4h3M2 6.500h3M2 9h3M9 4h3M9 6.500h3M9 9h3" /></svg>
        </StatusItem>
        <StatusItem $ml={13} $w={40} $on>
          <svg width="11" height="13" viewBox="0 0 11 13" fill="none" stroke="#444"><path d="M.5.5h10v12H.5zM2.500 3h6M2.500 5h6M2.500 7h6M2.500 9h6" /></svg>
        </StatusItem>
        <StatusItem $ml={13}>
          <svg width="14" height="14" viewBox="0 0 14 14" fill="none" stroke="#555"><path d="M7 12.500H.5V.5H9l2 2V6M2.500 3h5M2.500 5h5M2.500 7h3M2.500 9h3" /><circle cx="10" cy="10" r="3.500" fill="#555" /></svg>
        </StatusItem>
        <StatusItem $ml={19}>−</StatusItem>
        <Zoom />
        <StatusItem $ml={5}>+</StatusItem>
        <StatusItem $ml={14}>100%</StatusItem>
      </StatusBar>

      <Taskbar>
        <StartBtn>
          <svg width="16" height="16" viewBox="0 0 16 16" fill="#fff"><path d="M0 2.300 6.500 1.400V7.500H0zM7.300 1.300 16 0V7.500H7.300zM0 8.300H6.500V14.600L0 13.700zM7.300 8.300H16V16L7.300 14.700z" /></svg>
        </StartBtn>
        <TaskSearch><SearchGlyph c="#222" w={16} />Type here to search</TaskSearch>
        <TaskIcon $ml={16} $w={16}>
          <svg width="16" height="16" viewBox="0 0 16 16" fill="none" stroke="#fff" strokeWidth="2"><circle cx="8" cy="8" r="6.500" /></svg>
        </TaskIcon>
        <TaskIcon $ml={31} $w={18}>
          <svg width="17" height="18" viewBox="0 0 17 18" fill="none" stroke="#fff"><path d="M1 .5h10M1 17.500h10M1 4.500h10v9H1zM15 1v2M15 5v2M15 9v2" /></svg>
        </TaskIcon>
        <TaskIcon $ml={25} $w={24}>
          <svg width="24" height="24" viewBox="0 0 24 24"><rect width="24" height="24" fill="#2a6fe8" /><path d="M7 13l7-2-7-5" fill="none" stroke="#fff" strokeWidth="1.500" /><rect x="5" y="14" width="14" height="3" fill="#fff" /></svg>
        </TaskIcon>
        <TaskIcon $ml={12} $w={28} $run>
          <svg width="25" height="25" viewBox="0 0 25 25">
            <defs><linearGradient id="edgeA" x1="0" y1="0" x2="1" y2="1"><stop offset="0" stopColor="#35c1f1" /><stop offset="1" stopColor="#6fd65a" /></linearGradient></defs>
            <circle cx="12.500" cy="12.500" r="12" fill="url(#edgeA)" />
            <path d="M1 13C1 6 7 4 13 5c-5 1-7 5-6 10 1 5 6 8 12 6-3 3-8 4-12 2C3 21 1 17 1 13z" fill="#0b5fb5" />
            <path d="M9 13c1-3 6-4 9-2 2 1 3 3 2 5h-7c-2-1-4-1-4-3z" fill="#1b3a6b" />
          </svg>
        </TaskIcon>
        <TaskIcon $ml={9} $w={29} $run>
          <svg width="24" height="22" viewBox="0 0 24 22">
            <path d="M0 1h9l2 3h13v18H0z" fill="#e8a91d" /><rect y="5" width="24" height="17" fill="#fcd66f" />
            <path d="M7 20v-7h10v7h-3v-3h-4v3z" fill="#3a9bd9" />
          </svg>
        </TaskIcon>
        <TaskIcon $ml={9} $w={24}>
          <svg width="24" height="24" viewBox="0 0 24 24">
            <path d="M7 6V3a2 2 0 0 1 2-2h6a2 2 0 0 1 2 2v3" fill="none" stroke="#ddd" strokeWidth="1.500" />
            <rect y="6" width="24" height="18" fill="#f0f0f0" />
            <rect x="7" y="9" width="5" height="5" fill="#f25022" /><rect x="13" y="9" width="5" height="5" fill="#7fba00" />
            <rect x="7" y="15" width="5" height="5" fill="#00a4ef" /><rect x="13" y="15" width="5" height="5" fill="#ffb900" />
          </svg>
        </TaskIcon>
        <TaskIcon $ml={13} $w={24}>
          <AmazonBox>a<svg width="16" height="6" viewBox="0 0 16 6"><path d="M1 1c4 4 10 4 14 1" fill="none" stroke="#f39a1f" strokeWidth="1.500" /></svg></AmazonBox>
        </TaskIcon>
        <TaskIcon $ml={13} $w={24}>
          <svg width="24" height="23" viewBox="0 0 24 23"><path d="M12 0 24 8v15H0V8z" fill="#0f7ac7" /><path d="M0 8l12 8 12-8v15H0z" fill="#28b0ef" /><path d="M0 8l12 8 12-8" fill="#fff" /><path d="M4 5 12 .9 20 5l-8 6z" fill="#0f6fb6" /></svg>
        </TaskIcon>
        <TaskIcon $ml={13} $w={24}>
          <svg width="24" height="24" viewBox="0 0 24 24"><circle cx="12" cy="12" r="12" fill="#fff" /><circle cx="12" cy="12" r="9.500" fill="#222" /><path d="M12 4 5.500 8.500V20L9 21V10.500l3-2 3 2V21l3.500-1V8.500z" fill="#fff" /></svg>
        </TaskIcon>
        <TaskIcon $ml={14} $w={24}>
          <svg width="24" height="22" viewBox="0 0 24 22">
            <ellipse cx="11" cy="8" rx="11" ry="7" transform="rotate(-20 11 8)" fill="#e9e6e6" stroke="#c8303a" strokeWidth="2" />
            <path d="M10 2l5 12M17 3 10 13" stroke="#888" /><circle cx="14" cy="17" r="3" fill="none" stroke="#2190d8" strokeWidth="1.500" /><circle cx="21" cy="14" r="2.500" fill="none" stroke="#2190d8" strokeWidth="1.500" />
          </svg>
        </TaskIcon>
        <TaskIcon $ml={12} $w={28} $run>
          <svg width="23" height="23" viewBox="0 0 24 24">
            <path d="M12 12 3.500 5.500A11.500 11.500 0 0 1 23 9z" fill="#db4437" /><path d="M12 12 3.500 5.500A11.500 11.500 0 0 0 11 23.500z" fill="#0f9d58" /><path d="M12 12 23 9A11.500 11.500 0 0 1 11 23.500z" fill="#fbc02d" />
            <circle cx="12" cy="12" r="5.500" fill="#fff" /><circle cx="12" cy="12" r="4.300" fill="#4285f4" />
          </svg>
        </TaskIcon>
        <TaskIcon $ml={5} $w={34} $bg="#4b4b4b" $run>
          <svg width="26" height="24" viewBox="0 0 26 24">
            <rect x="6" y="0" width="20" height="6" fill="#41a5ee" /><rect x="6" y="6" width="20" height="6" fill="#2b7cd3" /><rect x="6" y="12" width="20" height="6" fill="#185abd" /><rect x="6" y="18" width="20" height="6" fill="#103f91" />
            <rect x="0" y="4" width="14" height="15" fill="#1a4fa8" />
            <text x="7" y="16" textAnchor="middle" fontSize="11" fontWeight="700" fill="#fff" fontFamily="Liberation Sans, sans-serif">W</text>
          </svg>
        </TaskIcon>
        <TaskIcon $ml={16} $w={26}>
          <svg width="26" height="26" viewBox="0 0 26 26">
            <circle cx="12" cy="12" r="12" fill="#fff" />
            <text x="12" y="19" textAnchor="middle" fontSize="20" fontWeight="700" fill="#1e88d2" fontFamily="Liberation Sans, sans-serif">?</text>
            <circle cx="20" cy="20" r="5.500" fill="#f0a92d" /><text x="20" y="24" textAnchor="middle" fontSize="9" fontWeight="700" fill="#fff" fontFamily="Liberation Sans, sans-serif">i</text>
          </svg>
        </TaskIcon>
        <TaskIcon $ml={23} $w={15}>
          <svg width="15" height="17" viewBox="0 0 15 17" fill="none" stroke="#ddd"><circle cx="10" cy="4" r="3" /><circle cx="4.500" cy="8" r="2.500" /><path d="M.5 16c0-3 1.500-4.500 4-4.500M6 13c1-3 2-4 4-4s4 2 4.500 4" /></svg>
        </TaskIcon>
        <TaskIcon $ml={39} $w={26}>
          <svg width="26" height="24" viewBox="0 0 26 24">
            <path d="M6 1 5 7l-5 2 6 2 6-4-3-1z" fill="#f7c325" />
            <path d="M6 21a5 5 0 0 1-1-9.800A7 7 0 0 1 18 9a5.500 5.500 0 0 1 3 11z" fill="#cfe6f5" />
          </svg>
        </TaskIcon>
        <TrayText $ml={5}>68°F</TrayText>
        <TaskIcon $ml={18} $w={12}>
          <svg width="12" height="7" viewBox="0 0 12 7"><path d="M.5 6.500 6 1l5.500 5.500" fill="none" stroke="#eee" strokeWidth="1.200" /></svg>
        </TaskIcon>
        <TaskIcon $ml={9} $w={16}>
          <svg width="16" height="10" viewBox="0 0 16 10"><path d="M3 10a3 3 0 0 1 0-6 4.500 4.500 0 0 1 8-1.500A3.500 3.500 0 0 1 16 7c0 2-1 3-2.500 3z" fill="#ddd" /></svg>
        </TaskIcon>
        <TaskIcon $ml={9} $w={12}>
          <svg width="11" height="18" viewBox="0 0 11 18" fill="none" stroke="#eee"><rect x="2.500" y=".5" width="6" height="11" rx="2" fill="#eee" /><path d="M.5 8c0 3 2 5 5 5s5-2 5-5M5.500 13v4M3 17.500h5" /></svg>
        </TaskIcon>
        <TaskIcon $ml={9} $w={16}>
          <svg width="16" height="15" viewBox="0 0 16 15" fill="none" stroke="#eee"><path d="M1 .5v3M4 .5v3M0 3.500h5V7H0zM2.500 7v2H5" /><rect x="5.500" y="5.500" width="10" height="8" /><rect x="7" y="7" width="6" height="5" fill="#eee" stroke="none" /></svg>
        </TaskIcon>
        <TaskIcon $ml={10} $w={16}>
          <svg width="16" height="15" viewBox="0 0 16 15" fill="none" stroke="#bbb"><path d="M1 14C1 7 7 1 15 1M5 14c0-4 4-9 10-9M9 14c0-3 3-5 6-5" /><circle cx="13.500" cy="13" r="1.500" fill="#ddd" /></svg>
        </TaskIcon>
        <TaskIcon $ml={6} $w={16}>
          <svg width="16" height="15" viewBox="0 0 16 15" fill="none" stroke="#eee"><path d="M.5 5h3L7.500 1v13L3.500 10h-3zM10 5c1 1.500 1 3.500 0 5M12.500 3c1.500 2.500 1.500 6.500 0 9" /></svg>
        </TaskIcon>
        <TaskIcon $ml={7} $w={17}>
          <svg width="17" height="15" viewBox="0 0 17 15" fill="#eee"><path d="M4.500 0 8.500 2.500 4.500 5 .5 2.500zM12.500 0l4 2.500-4 2.500-4-2.500zM4.500 5l4 2.500-4 2.500-4-2.500zM12.500 5l4 2.500-4 2.500-4-2.500zM4.500 11l4-2.500 4 2.500-4 3z" /></svg>
        </TaskIcon>
        <TaskIcon $ml={11} $w={17}>
          <svg width="17" height="18" viewBox="0 0 17 18" fill="none" stroke="#eee"><path d="M3 13 11 2c1-1 3 0 3 1.500L6 15l-4 2zM1 16c3-3 0-6 2-8" /></svg>
        </TaskIcon>
        <Clock><span>9:49 PM</span><span>10/12/2021</span></Clock>
        <TaskIcon $ml={9} $w={18}>
          <svg width="18" height="17" viewBox="0 0 18 17"><path d="M0 0h18v12H7l-4 4v-4H0z" fill="#eee" /><path d="M3 3h12M3 6h12M3 9h8" stroke="#333" /></svg>
          <Badge>2</Badge>
        </TaskIcon>
      </Taskbar>
    </Screen>
  );
}
